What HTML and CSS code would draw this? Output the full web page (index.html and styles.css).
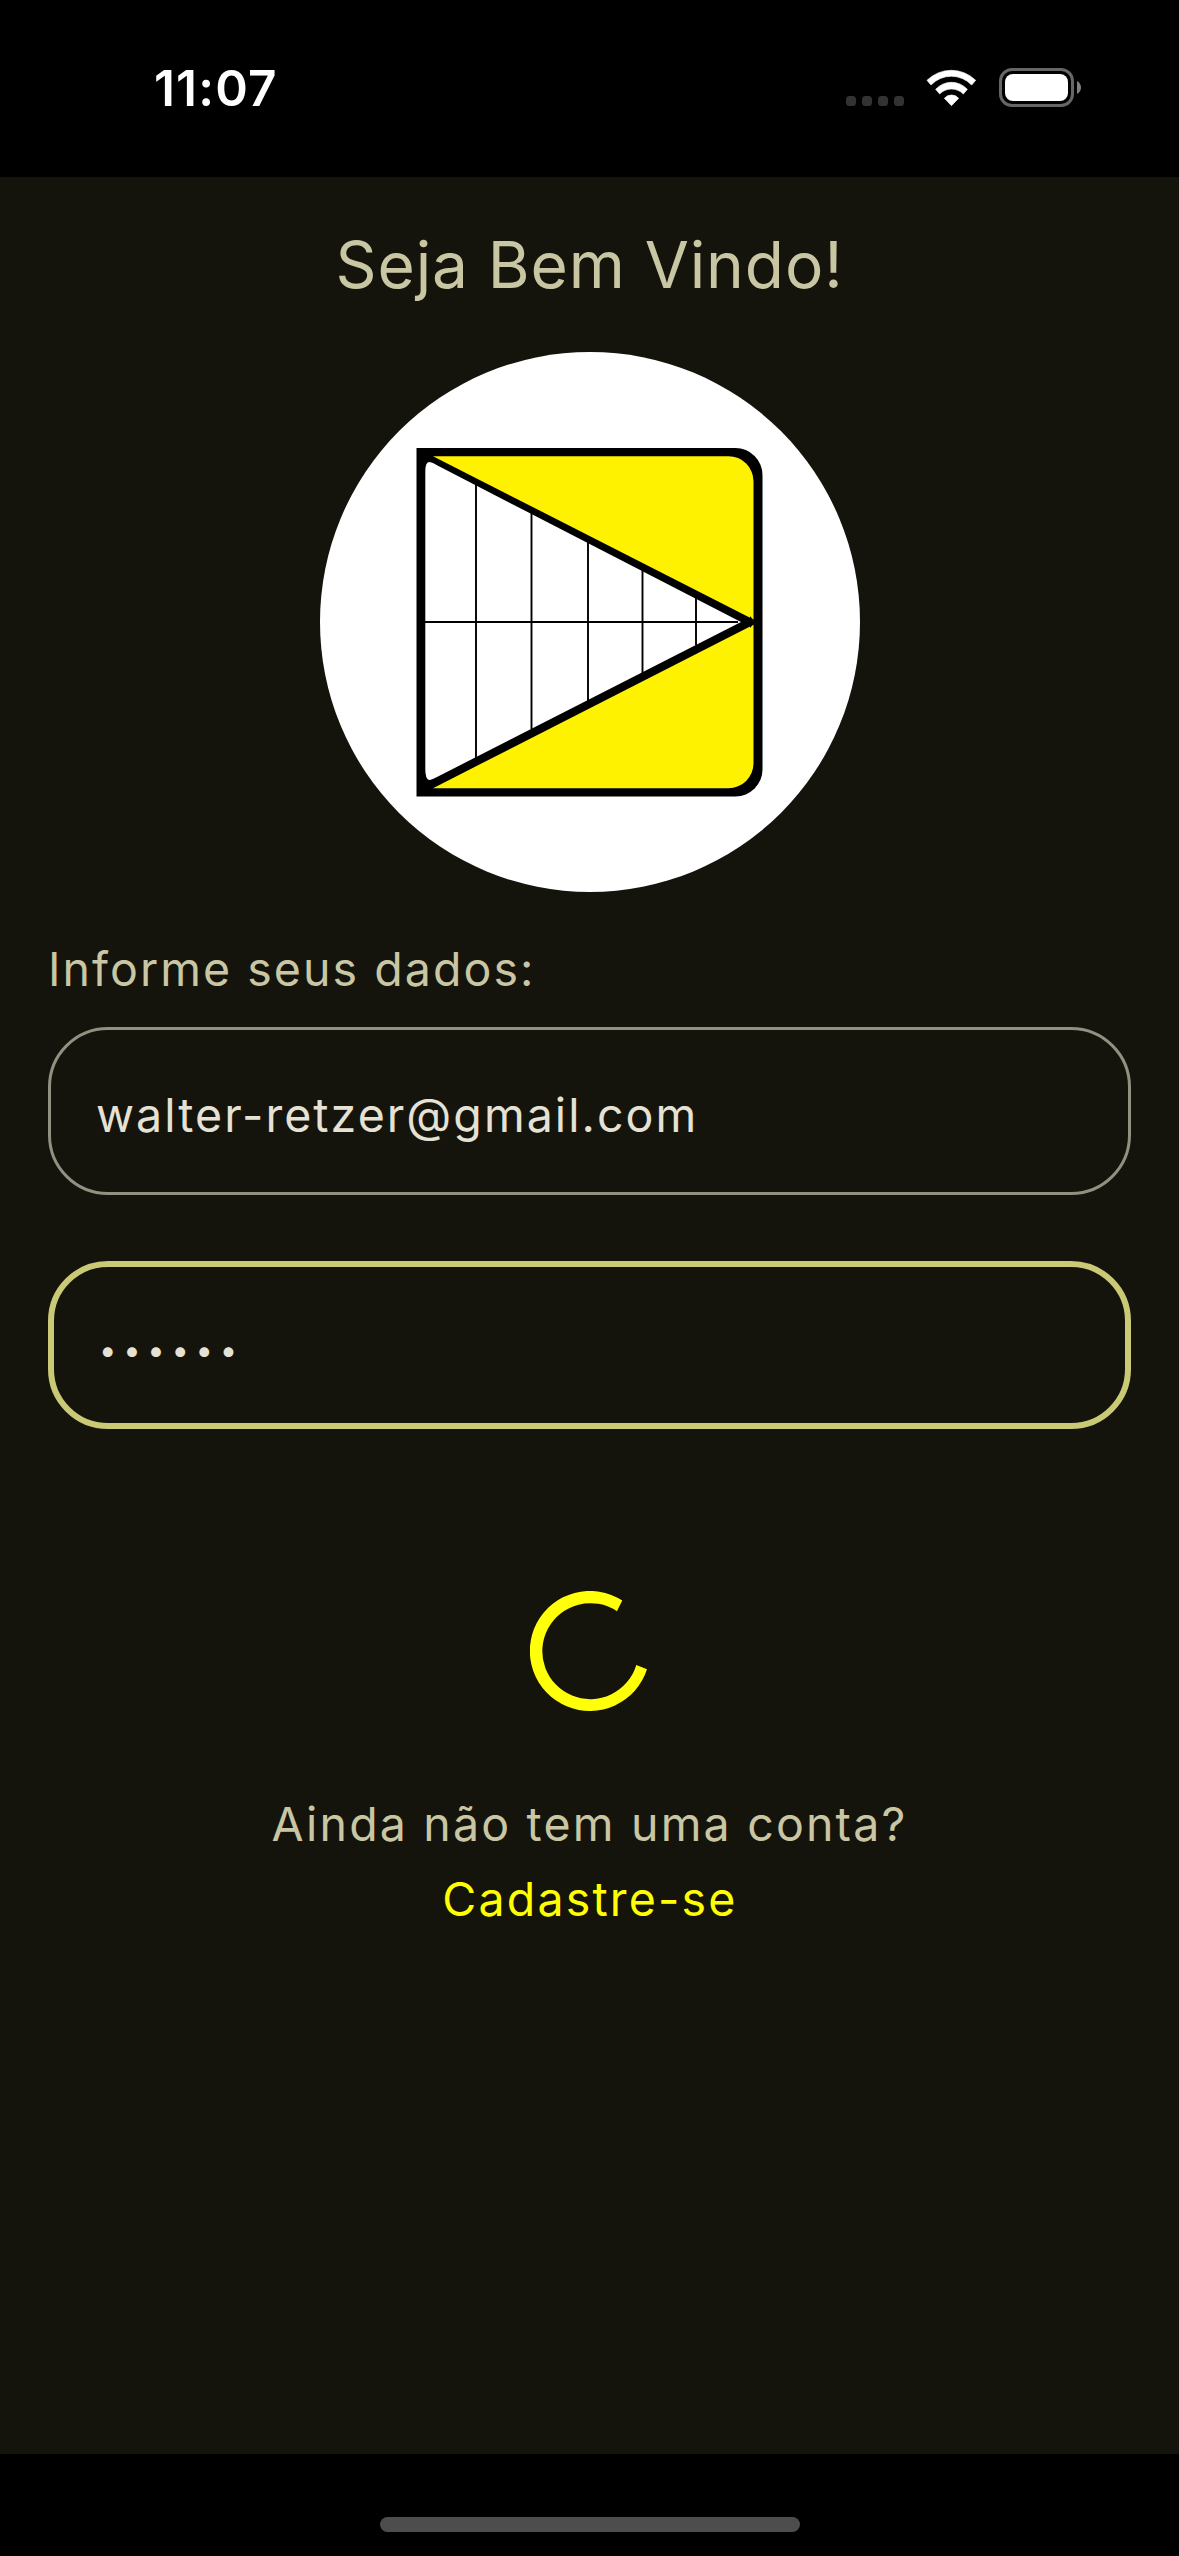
FILE: index.html
```html
<!DOCTYPE html>
<html lang="pt-BR">
<head>
  <meta charset="utf-8">
  <title>Seja Bem Vindo!</title>
  <link rel="stylesheet" href="styles.css">
</head>
<body>
  <div class="screen">
    <header class="status">
      <span class="status-time">11:07</span>
      <div class="status-icons">
        <div class="signal"><i></i><i></i><i></i><i></i></div>
        <svg class="wifi" viewBox="0 0 153 114" aria-hidden="true">
          <path d="M3 34A103.500 103.500 0 0 1 149 34L137 48A84 84 0 0 0 15 48Z"/>
          <path d="M29 61A64 64 0 0 1 124 61L112 75A49.500 49.500 0 0 0 41 75Z"/>
          <path d="M55 88A28 28 0 0 1 98 88L76.500 110Z"/>
        </svg>
        <svg class="battery" viewBox="0 0 83 39" aria-hidden="true">
          <rect class="battery-shell" x="1.500" y="1.500" width="72" height="36" rx="11.500"/>
          <rect class="battery-level" x="6" y="6" width="63" height="27" rx="8"/>
          <path class="battery-tip" d="M78 13Q82 15.500 82 19.500Q82 23.500 78 26Z"/>
        </svg>
      </div>
    </header>

    <main class="content">
      <h1 class="title">Seja Bem Vindo!</h1>
      <svg class="logo" viewBox="320 352 540 540" role="img" aria-label="Logo">
        <circle class="logo-disc" cx="590" cy="622" r="270"/>
        <path class="logo-frame" d="M416.500 448H735.500A27 27 0 0 1 762.500 475V769.500A27 27 0 0 1 735.500 796.500H416.500Z"/>
        <path class="logo-yellow" d="M433 456.200H728.500A25 25 0 0 1 753.500 481.200V619.500Z"/>
        <path class="logo-yellow" d="M433 788.200H728.500A25 25 0 0 0 753.500 763.200V624.700Z"/>
        <path class="logo-tip" d="M750 616L755 622L750 628Z"/>
        <path class="logo-sheet" d="M425.300 472Q425.300 462 429 462Q431.500 462 437 465.300L741 622L437 777Q431.500 780 429 780Q425.300 779 425.300 769Z"/>
        <path class="logo-grid" d="M425 622H738M476 485V758M531.500 513V729M588 542V701M642.500 570V673M696 598V645"/>
      </svg>

      <form class="form">
        <p class="label">Informe seus dados:</p>
        <div class="field"><span>walter-retzer@gmail.com</span></div>
        <div class="field field-active"><span class="password">••••••</span></div>
      </form>

      <svg class="spinner" viewBox="-60 -60 120 120" aria-hidden="true">
        <path d="M57 18.200A60 60 0 1 1 32.300 -50.500L26.900 -39.800A48 48 0 1 0 46.300 13.900Z"/>
      </svg>

      <div class="signup">
        <span>Ainda não tem uma conta?</span>
        <a class="signup-link">Cadastre-se</a>
      </div>
    </main>

    <footer class="home"><div class="home-bar"></div></footer>
  </div>
</body>
</html>
```
FILE: styles.css
```css
* {
  box-sizing: border-box;
}

body {
  margin: 0;
  background: #000;
}

.screen {
  display: flex;
  flex-direction: column;
  width: 1179px;
  height: 2556px;
  font-family: Inter, "Liberation Sans", sans-serif;
  font-size: 46.5px;
  letter-spacing: 2.05px;
  color: #c9c6a3;
}

/* Status bar */
.status {
  display: flex;
  justify-content: space-between;
  align-items: flex-start;
  height: 177px;
  padding: 58px 97px 0 154px;
}

.status-time {
  font-size: 49.5px;
  line-height: 60px;
  font-weight: 600;
  letter-spacing: 1.17px;
  color: #fff;
}

.status-icons {
  display: flex;
  align-items: flex-end;
  height: 49px;
}

.signal {
  display: flex;
  gap: 6px;
  margin: 0 22px 1px 0;
}

.signal i {
  width: 10px;
  height: 10px;
  border-radius: 3.5px;
  background: #333;
}

.wifi {
  width: 51px;
  height: 38px;
  margin-right: 22px;
  fill: #fff;
  stroke: #fff;
  stroke-width: 2;
  stroke-linejoin: round;
}

.battery {
  width: 83px;
  height: 39px;
}

.battery-shell {
  fill: none;
  stroke: #666;
  stroke-width: 3;
}

.battery-level {
  fill: #fff;
}

.battery-tip {
  fill: #808080;
}

/* Login content */
.content {
  display: flex;
  flex-direction: column;
  align-items: center;
  height: 2277px;
  padding: 49px 48px 0;
  background: #14140c;
}

.title {
  margin: 0 0 48px;
  font-size: 64px;
  line-height: 78px;
  font-weight: 400;
  letter-spacing: 0.9px;
}

.logo {
  width: 540px;
  height: 540px;
}

.logo-disc,
.logo-sheet {
  fill: #fff;
}

.logo-frame,
.logo-tip {
  fill: #000;
}

.logo-yellow {
  fill: #fff200;
}

.logo-grid {
  fill: none;
  stroke: #000;
  stroke-width: 1.9;
}

.form {
  width: 100%;
  margin: 47px 0 0;
}

.label {
  margin: 0 0 28px;
  line-height: 60px;
}

.field {
  display: flex;
  align-items: center;
  height: 168px;
  padding: 8px 45px 0;
  border: 3px solid #909181;
  border-radius: 60px;
  color: #e5e2d5;
}

.field-active {
  margin-top: 66px;
  padding: 8px 45px 0;
  border: 6px solid #cac975;
}

.password {
  font-size: 31px;
  letter-spacing: 6.7px;
}

.spinner {
  width: 120px;
  height: 120px;
  margin: 162px 0 76px;
  fill: #ffff0a;
}

.signup {
  display: flex;
  flex-direction: column;
  align-items: center;
  line-height: 75px;
  letter-spacing: 2.18px;
}

.signup-link {
  padding-left: 1px;
  color: #ffff00;
}

/* Home indicator */
.home {
  display: flex;
  justify-content: center;
  align-items: flex-end;
  height: 102px;
  padding-bottom: 24px;
}

.home-bar {
  width: 420px;
  height: 15px;
  border-radius: 8px;
  background: #4d4d4d;
}
```
